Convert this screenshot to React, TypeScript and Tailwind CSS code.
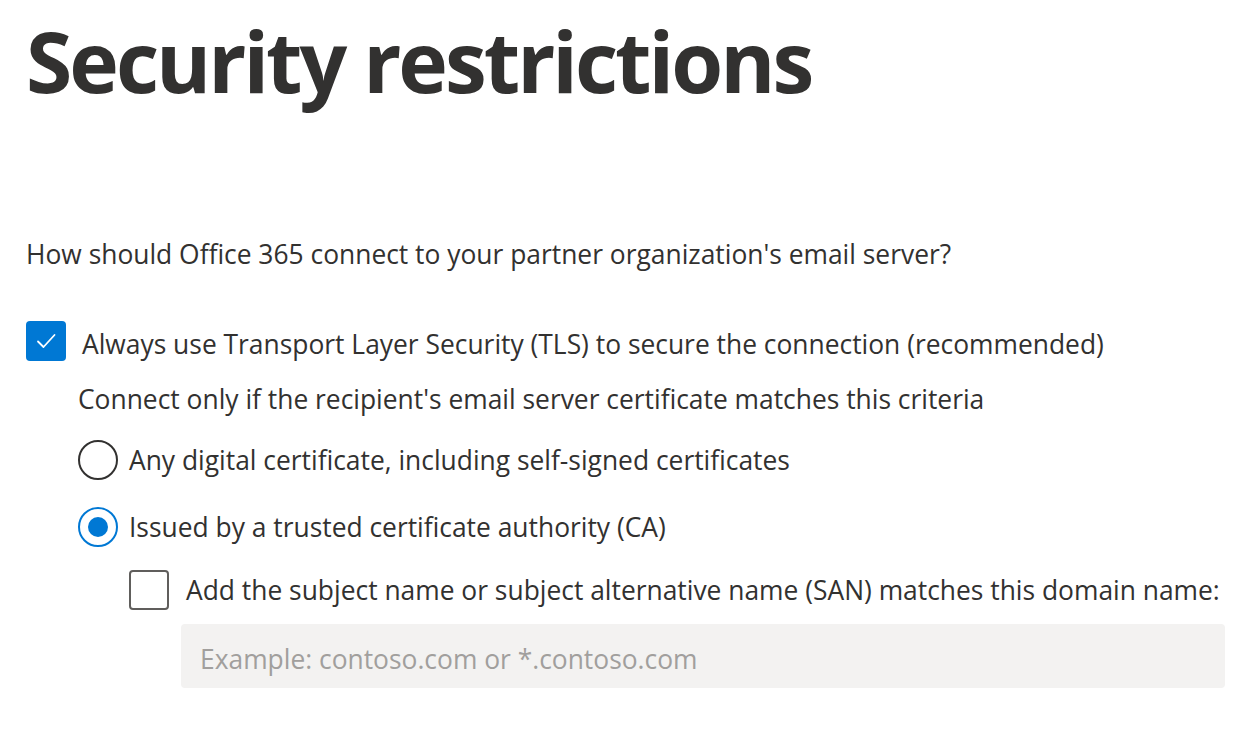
import React, { useState } from 'react';

const font = { fontFamily: '"Open Sans", "Noto Sans", sans-serif' };

export default function App() {
  const [tls, setTls] = useState(true);
  const [mode, setMode] = useState<'any' | 'ca'>('ca');
  const [san, setSan] = useState(false);
  const [domain, setDomain] = useState('');

  return (
    <div className="w-[1258px] h-[732px] bg-white text-[#323130] overflow-hidden" style={font}>
      <div className="pl-[26px] pt-[11px]">
        <h1 className="text-[84px] font-bold leading-[100px] tracking-[-3px] text-[#323130]">Security restrictions</h1>

        <p className="mt-[127px] text-[26.4px] leading-[32px]">
          How should Office 365 connect to your partner organization's email server?
        </p>

        {/* TLS checkbox */}
        <label className="mt-[51px] flex items-center gap-[16px] cursor-pointer">
          <button
            onClick={() => setTls(!tls)}
            className={`w-[40px] h-[40px] rounded-[4px] flex items-center justify-center ${tls ? 'bg-[#0078d4]' : 'border-2 border-[#605e5c] bg-white'}`}
          >
            {tls && (
              <svg width="22" height="22" viewBox="0 0 22 22" fill="none">
                <path d="M3 11.5 L8.5 17 L19.5 5" stroke="white" strokeWidth="1.8" strokeLinecap="round" strokeLinejoin="round" />
              </svg>
            )}
          </button>
          <span className="text-[26.4px] leading-[32px] pt-[5px]">
            Always use Transport Layer Security (TLS) to secure the connection (recommended)
          </span>
        </label>

        <div className="pl-[52px]">
          <p className="mt-[22px] text-[26.4px] leading-[32px]">
            Connect only if the recipient's email server certificate matches this criteria
          </p>

          {/* Radio: any */}
          <label className="mt-[25px] flex items-center gap-[11px] cursor-pointer" onClick={() => setMode('any')}>
            <span
              className={`w-[40px] h-[40px] rounded-full border-2 flex items-center justify-center ${mode === 'any' ? 'border-[#0078d4]' : 'border-[#323130]'}`}
            >
              {mode === 'any' && <span className="w-[20px] h-[20px] rounded-full bg-[#0078d4]" />}
            </span>
            <span className="text-[26.4px] leading-[32px]">Any digital certificate, including self-signed certificates</span>
          </label>

          {/* Radio: CA */}
          <label className="mt-[27px] flex items-center gap-[11px] cursor-pointer" onClick={() => setMode('ca')}>
            <span
              className={`w-[40px] h-[40px] rounded-full border-2 flex items-center justify-center ${mode === 'ca' ? 'border-[#0078d4]' : 'border-[#323130]'}`}
            >
              {mode === 'ca' && <span className="w-[20px] h-[20px] rounded-full bg-[#0078d4]" />}
            </span>
            <span className="text-[26.4px] leading-[32px]">Issued by a trusted certificate authority (CA)</span>
          </label>

          <div className="pl-[51px]">
            <label className="mt-[23px] flex items-center gap-[17px] cursor-pointer" onClick={() => setSan(!san)}>
              <span
                className={`w-[40px] h-[40px] rounded-[4px] flex items-center justify-center ${san ? 'bg-[#0078d4]' : 'border-2 border-[#605e5c] bg-white'}`}
              />
              <span className="text-[26.4px] leading-[32px] whitespace-nowrap">
                Add the subject name or subject alternative name (SAN) matches this domain name:
              </span>
            </label>

            <div className="pl-[52px] mt-[14px]">
              <input
                value={domain}
                onChange={(e) => setDomain(e.target.value)}
                placeholder="Example: contoso.com or *.contoso.com"
                className="w-[1044px] h-[64px] rounded-[4px] bg-[#f3f2f1] px-[19px] pt-[6px] text-[26.4px] text-[#323130] placeholder:text-[#a19f9d] outline-none"
                style={font}
              />
            </div>
          </div>
        </div>
      </div>
    </div>
  );
}
